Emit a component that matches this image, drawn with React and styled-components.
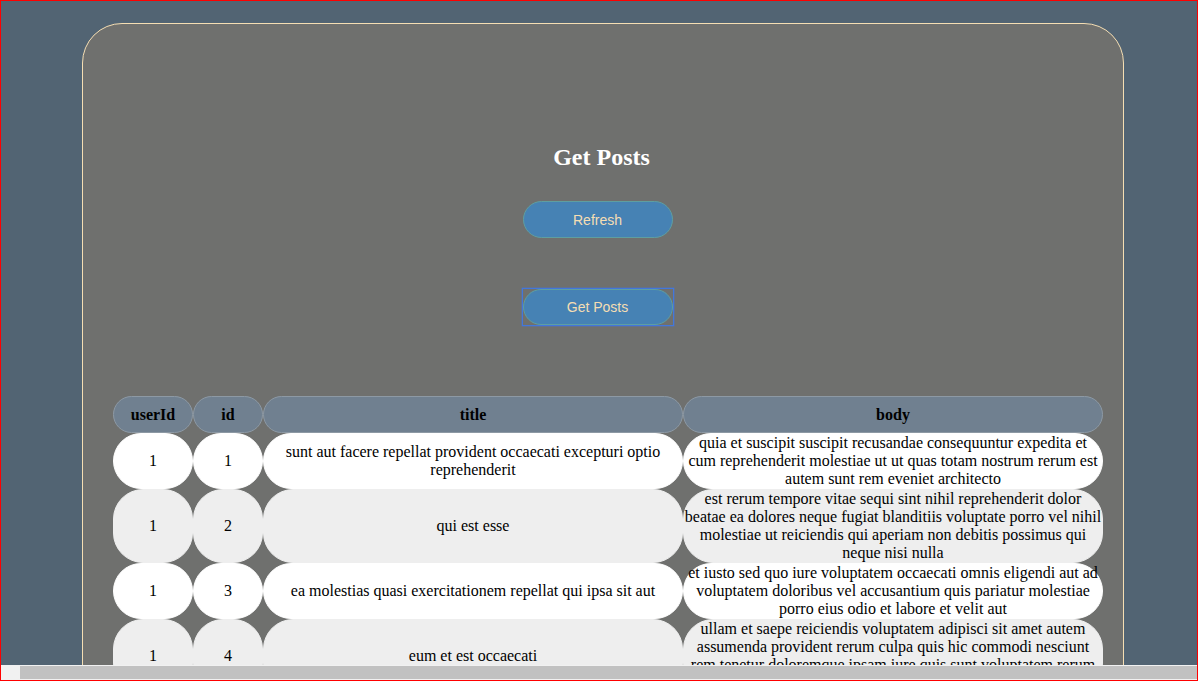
import React from 'react'
import styled, { createGlobalStyle } from 'styled-components'

const GlobalStyle = createGlobalStyle`
  html, body {
    margin: 0;
    padding: 0;
  }
  * {
    box-sizing: border-box;
  }
`;

const Viewport = styled.div`
  height: 100vh;
  border: 1px solid #ff0000;
  background: #526473;
  display: flex;
  flex-direction: column;
  overflow: hidden;
  font-family: "Liberation Serif", "Times New Roman", serif;
`;

const Scroller = styled.div`
  flex: 1;
  min-height: 0;
  overflow: hidden;
`;

const ScrollBar = styled.div`
  flex: 0 0 15px;
  display: flex;
  background: #f1f1f1;
  padding: 1px 0 1px 19px;
`;

const Thumb = styled.div`
  flex: 1;
  background: #c1c1c1;
`;

const Page = styled.div`
  padding: 22px 0 0 81px;
`;

const Card = styled.section`
  width: 1042px;
  min-height: 900px;
  background: #6f706e;
  border: 1px solid #f5deb3;
  border-radius: 40px;
  padding-top: 119px;
`;

const Header = styled.div`
  display: flex;
  flex-direction: column;
  align-items: center;
`;

const Title = styled.h2`
  margin: 0 3px 0 0;
  font-size: 24px;
  line-height: 28px;
  font-weight: bold;
  color: #ffffff;
`;

const Button = styled.button`
  width: 150px;
  height: ${(p) => p.$h || 37}px;
  border: 1px solid #5f9ea0;
  border-radius: 20px;
  background: #4682b4;
  color: #f5deb3;
  font-family: "Liberation Sans", Arial, sans-serif;
  font-size: 14px;
  cursor: pointer;
  padding: 0;
`;

const RefreshWrap = styled.div`
  margin-top: 30px;
  margin-right: 11px;
  display: flex;
`;

const FocusRing = styled.div`
  margin-top: 50px;
  margin-right: 11px;
  display: flex;
  border: 1px solid #4277dc;
  box-shadow: 0 0 0 0.5px rgba(66, 119, 220, 0.6);
`;

const Table = styled.table`
  margin: 70px 0 0 30px;
  width: 990px;
  border-collapse: separate;
  border-spacing: 0;
  table-layout: fixed;
  color: #000000;
  font-size: 16px;
`;

const Th = styled.th`
  background: #708090;
  border: 1px solid #8d99a4;
  border-radius: 30px;
  padding: 8px 0;
  line-height: 19px;
  font-weight: bold;
  text-align: center;
`;

const Td = styled.td`
  background: ${(p) => (p.$alt ? '#eeeeee' : '#ffffff')};
  border: 1px solid ${(p) => (p.$alt ? '#eeeeee' : '#ffffff')};
  border-radius: 30px;
  padding: 0;
  line-height: 18px;
  text-align: center;
  vertical-align: middle;
`;

const posts = [
  {
    userId: 1,
    id: 1,
    title: 'sunt aut facere repellat provident occaecati excepturi optio reprehenderit',
    body: 'quia et suscipit suscipit recusandae consequuntur expedita et cum reprehenderit molestiae ut ut quas totam nostrum rerum est autem sunt rem eveniet architecto',
  },
  {
    userId: 1,
    id: 2,
    title: 'qui est esse',
    body: 'est rerum tempore vitae sequi sint nihil reprehenderit dolor beatae ea dolores neque fugiat blanditiis voluptate porro vel nihil molestiae ut reiciendis qui aperiam non debitis possimus qui neque nisi nulla',
  },
  {
    userId: 1,
    id: 3,
    title: 'ea molestias quasi exercitationem repellat qui ipsa sit aut',
    body: 'et iusto sed quo iure voluptatem occaecati omnis eligendi aut ad voluptatem doloribus vel accusantium quis pariatur molestiae porro eius odio et labore et velit aut',
  },
  {
    userId: 1,
    id: 4,
    title: 'eum et est occaecati',
    body: 'ullam et saepe reiciendis voluptatem adipisci sit amet autem assumenda provident rerum culpa quis hic commodi nesciunt rem tenetur doloremque ipsam iure quis sunt voluptatem rerum illo velit',
  },
  {
    userId: 1,
    id: 5,
    title: 'nesciunt quas odio',
    body: 'repudiandae veniam quaerat sunt sed alias aut fugiat sit autem sed est voluptatem omnis possimus esse voluptatibus quis est aut tenetur dolor neque',
  },
];

const App = () => {
  return (
    <Viewport>
      <GlobalStyle />
      <Scroller>
        <Page>
          <Card>
            <Header>
              <Title>Get Posts</Title>
              <RefreshWrap>
                <Button>Refresh</Button>
              </RefreshWrap>
              <FocusRing>
                <Button $h={36}>Get Posts</Button>
              </FocusRing>
            </Header>

            <Table>
              <colgroup>
                <col style={{ width: 80 }} />
                <col style={{ width: 70 }} />
                <col style={{ width: 420 }} />
                <col style={{ width: 420 }} />
              </colgroup>
              <thead>
                <tr>
                  <Th>userId</Th>
                  <Th>id</Th>
                  <Th>title</Th>
                  <Th>body</Th>
                </tr>
              </thead>
              <tbody>
                {posts.map((post, i) => {
                  const alt = i % 2 === 1;
                  return (
                    <tr key={post.id}>
                      <Td $alt={alt}>{post.userId}</Td>
                      <Td $alt={alt}>{post.id}</Td>
                      <Td $alt={alt}>{post.title}</Td>
                      <Td $alt={alt}>{post.body}</Td>
                    </tr>
                  );
                })}
              </tbody>
            </Table>
          </Card>
        </Page>
      </Scroller>
      <ScrollBar>
        <Thumb />
      </ScrollBar>
    </Viewport>
  )
}

export default App
